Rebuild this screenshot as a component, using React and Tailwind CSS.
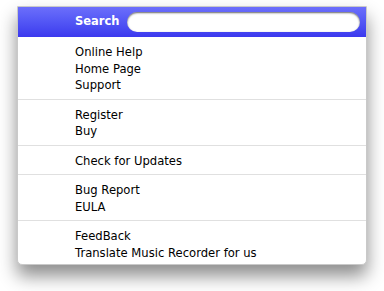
import React from 'react';

const sections = [
    ['Online Help', 'Home Page', 'Support'],
    ['Register', 'Buy'],
    ['Check for Updates'],
    ['Bug Report', 'EULA'],
    ['FeedBack', 'Translate Music Recorder for us'],
];

const App = () => {
    return (
        <div className="w-[384px] h-[291px] bg-white pl-[17px] pt-[6px]" style={{ fontFamily: '"DejaVu Sans", "Liberation Sans", sans-serif' }}>
            <div className="w-[350px] bg-white border border-[#c9c9c9] rounded-b-[5px] shadow-[0_11px_18px_rgba(0,0,0,0.45)] overflow-hidden">
                {/* header with search field */}
                <div className="h-[30px] flex items-center pl-[57px] bg-gradient-to-b from-[#6c6efb] to-[#3c38ee]">
                    <span className="text-white font-bold text-[11.5px] w-[52px]">Search</span>
                    <div className="w-[233px] h-[20px] rounded-full bg-white shadow-[inset_0_1px_2px_rgba(0,0,0,0.6)]"></div>
                </div>
                {sections.map((items, i) => (
                    <div
                        key={i}
                        className={`pl-[57px] pt-[6px] text-[11.6px] leading-[16.5px] text-black ${i < sections.length - 1 ? 'pb-[6px] border-b border-[#e0e0e0]' : 'pb-[4px]'}`}
                    >
                        {items.map(item => (
                            <div key={item} className="translate-y-[1px]">{item}</div>
                        ))}
                    </div>
                ))}
            </div>
        </div>
    );
};

export default App;
